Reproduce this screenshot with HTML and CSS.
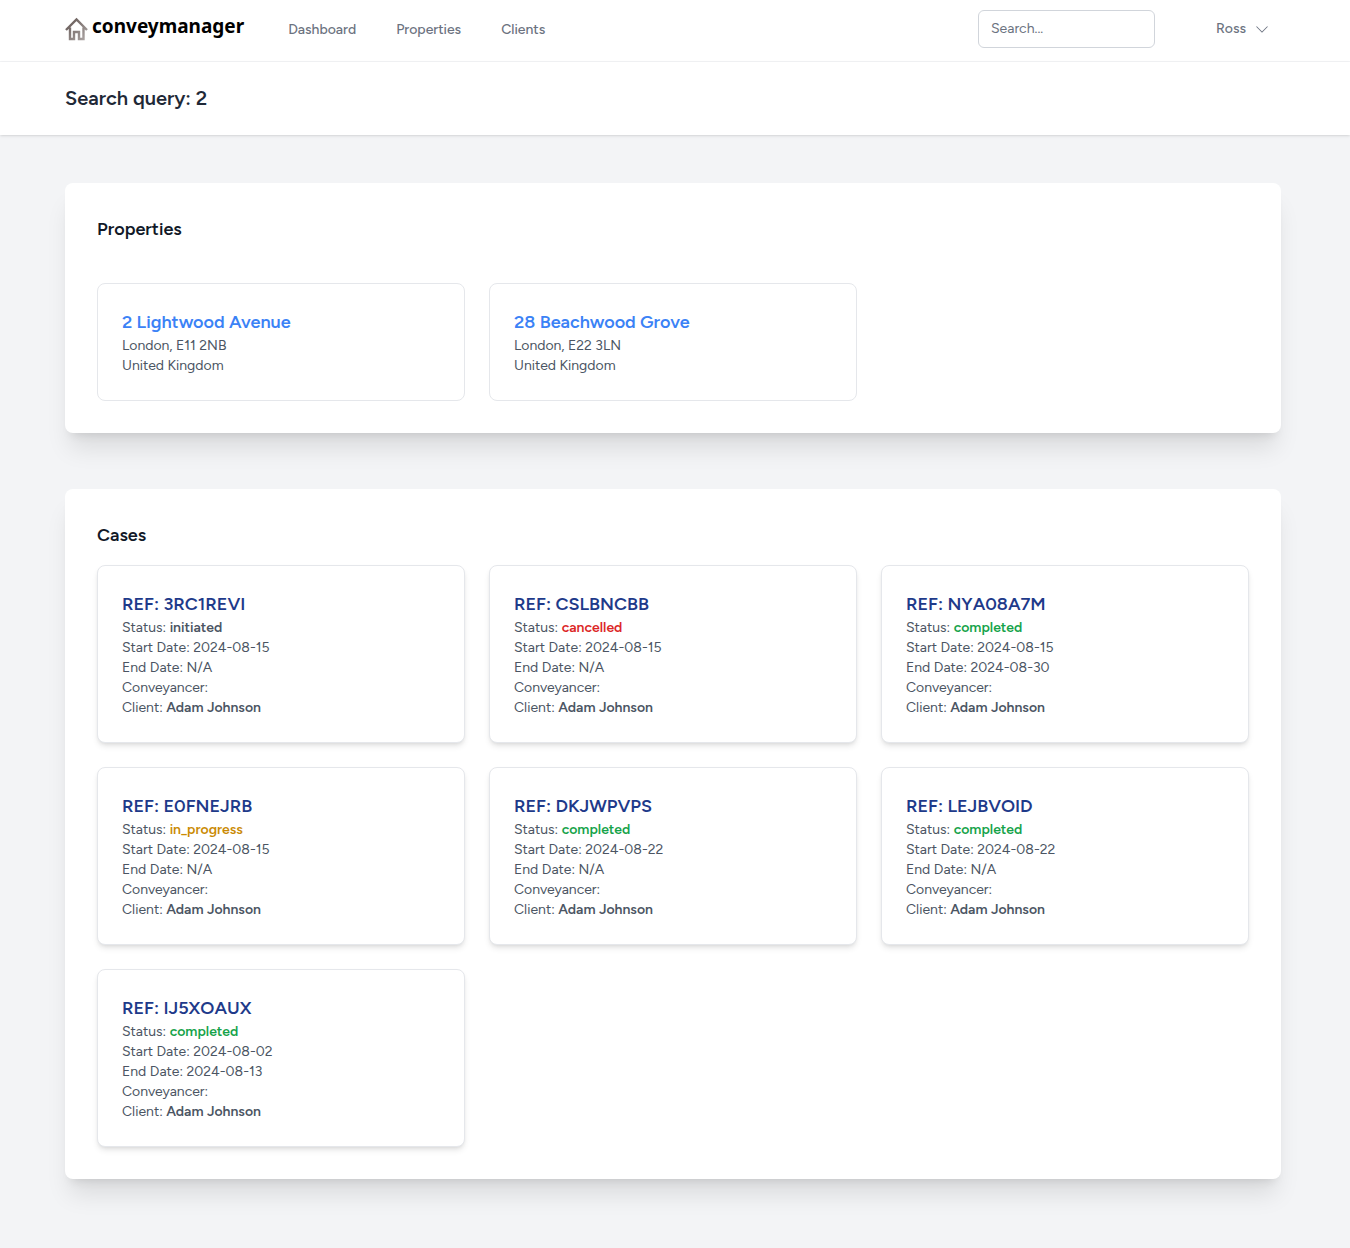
FILE: index.html
```
<!DOCTYPE html>
<html lang="en">
<head>
<meta charset="utf-8">
<meta name="viewport" content="width=device-width, initial-scale=1">
<title>Search - conveymanager</title>
<link rel="stylesheet" href="styles.css">
</head>
<body>
<nav class="nav">
  <div class="container nav-row">
    <a class="logo" href="#">
      <svg class="logo-icon" width="24" height="24" viewBox="0 0 24 24" fill="none" stroke="url(#logo-shade)" stroke-width="2.4">
        <defs>
          <linearGradient id="logo-shade" x1="0" y1="0" x2="24" y2="24" gradientUnits="userSpaceOnUse">
            <stop offset="0.2" stop-color="#6b5f5c"/>
            <stop offset="1" stop-color="#b5afae"/>
          </linearGradient>
        </defs>
        <path d="M1 13 11.500 2.500 22 13M5 10.500V22H9V15H14V22H18.500V10.500"/>
      </svg>
      <span class="logo-text">conveymanager</span>
    </a>
    <div class="nav-links">
      <a href="#">Dashboard</a>
      <a href="#">Properties</a>
      <a href="#">Clients</a>
    </div>
    <form class="search">
      <input type="text" placeholder="Search..." aria-label="Search">
    </form>
    <button class="user" type="button">
      Ross
      <svg width="16" height="16" viewBox="0 0 20 20" fill="#6b7280"><path d="M3.500 6.500 10 13 16.500 6.500 17.300 7.300 10 14.600 2.700 7.300Z"/></svg>
    </button>
  </div>
</nav>
<header class="page-header">
  <div class="container"><h1>Search query: 2</h1></div>
</header>
<main class="container main">
  <section class="panel">
    <h2 class="spaced">Properties</h2>
    <div class="grid">
      <article class="card">
        <h3><a class="property" href="#">2 Lightwood Avenue</a></h3>
        <p>London, E11 2NB</p>
        <p>United Kingdom</p>
      </article>
      <article class="card">
        <h3><a class="property" href="#">28 Beachwood Grove</a></h3>
        <p>London, E22 3LN</p>
        <p>United Kingdom</p>
      </article>
    </div>
  </section>
  <section class="panel">
    <h2>Cases</h2>
    <div class="grid">
      <article class="card raised">
        <h3><a class="case" href="#">REF: 3RC1REVI</a></h3>
        <p>Status: <strong>initiated</strong></p>
        <p>Start Date: 2024-08-15</p>
        <p>End Date: N/A</p>
        <p>Conveyancer:</p>
        <p>Client: <strong>Adam Johnson</strong></p>
      </article>
      <article class="card raised">
        <h3><a class="case" href="#">REF: CSLBNCBB</a></h3>
        <p>Status: <strong class="cancelled">cancelled</strong></p>
        <p>Start Date: 2024-08-15</p>
        <p>End Date: N/A</p>
        <p>Conveyancer:</p>
        <p>Client: <strong>Adam Johnson</strong></p>
      </article>
      <article class="card raised">
        <h3><a class="case" href="#">REF: NYA08A7M</a></h3>
        <p>Status: <strong class="completed">completed</strong></p>
        <p>Start Date: 2024-08-15</p>
        <p>End Date: 2024-08-30</p>
        <p>Conveyancer:</p>
        <p>Client: <strong>Adam Johnson</strong></p>
      </article>
      <article class="card raised">
        <h3><a class="case" href="#">REF: E0FNEJRB</a></h3>
        <p>Status: <strong class="in-progress">in_progress</strong></p>
        <p>Start Date: 2024-08-15</p>
        <p>End Date: N/A</p>
        <p>Conveyancer:</p>
        <p>Client: <strong>Adam Johnson</strong></p>
      </article>
      <article class="card raised">
        <h3><a class="case" href="#">REF: DKJWPVPS</a></h3>
        <p>Status: <strong class="completed">completed</strong></p>
        <p>Start Date: 2024-08-22</p>
        <p>End Date: N/A</p>
        <p>Conveyancer:</p>
        <p>Client: <strong>Adam Johnson</strong></p>
      </article>
      <article class="card raised">
        <h3><a class="case" href="#">REF: LEJBVOID</a></h3>
        <p>Status: <strong class="completed">completed</strong></p>
        <p>Start Date: 2024-08-22</p>
        <p>End Date: N/A</p>
        <p>Conveyancer:</p>
        <p>Client: <strong>Adam Johnson</strong></p>
      </article>
      <article class="card raised">
        <h3><a class="case" href="#">REF: IJ5XOAUX</a></h3>
        <p>Status: <strong class="completed">completed</strong></p>
        <p>Start Date: 2024-08-02</p>
        <p>End Date: 2024-08-13</p>
        <p>Conveyancer:</p>
        <p>Client: <strong>Adam Johnson</strong></p>
      </article>
    </div>
  </section>
</main>
</body>
</html>
```
FILE: styles.css
```
* {
  box-sizing: border-box;
}

body {
  margin: 0;
  min-height: 100vh;
  background: #f3f4f6;
  color: #111827;
  font-family: Figtree, Lato, "Liberation Sans", sans-serif;
  font-size: 14px;
  line-height: 20px;
}

h1, h2, h3, p {
  margin: 0;
}

a {
  color: inherit;
  text-decoration: none;
}

.container {
  max-width: 1280px;
  margin: 0 auto;
  padding: 0 34px 0 30px;
}

.nav {
  background: #fff;
  border-bottom: 1px solid #f3f4f6;
}

.nav-row {
  display: flex;
  align-items: center;
  min-height: 61px;
  padding-bottom: 4px;
}

.logo {
  display: flex;
  align-items: center;
  gap: 3px;
  color: #000;
}

.logo-text {
  padding-bottom: 6px;
  font: 700 19px/24px "Noto Sans", sans-serif;
}

.nav-links {
  display: flex;
  flex: 1;
  gap: 40px;
  margin-left: 44px;
  padding-top: 2px;
  color: #6b7280;
  font-weight: 500;
}

.search input {
  width: 177px;
  height: 38px;
  padding: 8px 12px;
  border: 1px solid #d1d5db;
  border-radius: 6px;
  font: inherit;
}

.search input::placeholder {
  color: #6b7280;
  opacity: 1;
}

.user {
  display: flex;
  align-items: center;
  gap: 8px;
  margin: 0 11px 0 49px;
  padding: 8px 0 8px 12px;
  border: 0;
  background: #fff;
  color: #6b7280;
  font: inherit;
  font-weight: 500;
}

.page-header {
  position: relative;
  padding: 24px 0;
  background: #fff;
  box-shadow: 0 1px 3px rgba(0, 0, 0, .1), 0 1px 2px -1px rgba(0, 0, 0, .1);
}

h1 {
  color: #1f2937;
  font-size: 20px;
  font-weight: 600;
  line-height: 25px;
}

.main {
  display: grid;
  gap: 56px;
  padding-top: 48px;
  padding-bottom: 69px;
}

.panel {
  padding: 32px;
  border-radius: 8px;
  background: #fff;
  box-shadow: 0 20px 25px -5px rgba(0, 0, 0, .1), 0 8px 10px -6px rgba(0, 0, 0, .1);
}

h2, h3 {
  font-size: 18px;
  font-weight: 600;
  line-height: 28px;
}

h2 {
  margin-bottom: 16px;
}

h2.spaced {
  margin-bottom: 40px;
}

.grid {
  display: grid;
  grid-template-columns: repeat(auto-fill, minmax(300px, 1fr));
  gap: 24px;
}

.card {
  padding: 24px;
  border: 1px solid #e5e7eb;
  border-radius: 8px;
  color: #4b5563;
}

.raised {
  background: #fff;
  box-shadow: 0 4px 6px -1px rgba(0, 0, 0, .1), 0 2px 4px -2px rgba(0, 0, 0, .1);
}

.property {
  color: #3b82f6;
}

.case {
  color: #1e3a8a;
}

strong {
  font-weight: 600;
}

.cancelled {
  color: #dc2626;
}

.completed {
  color: #16a34a;
}

.in-progress {
  color: #ca8a04;
}
```
